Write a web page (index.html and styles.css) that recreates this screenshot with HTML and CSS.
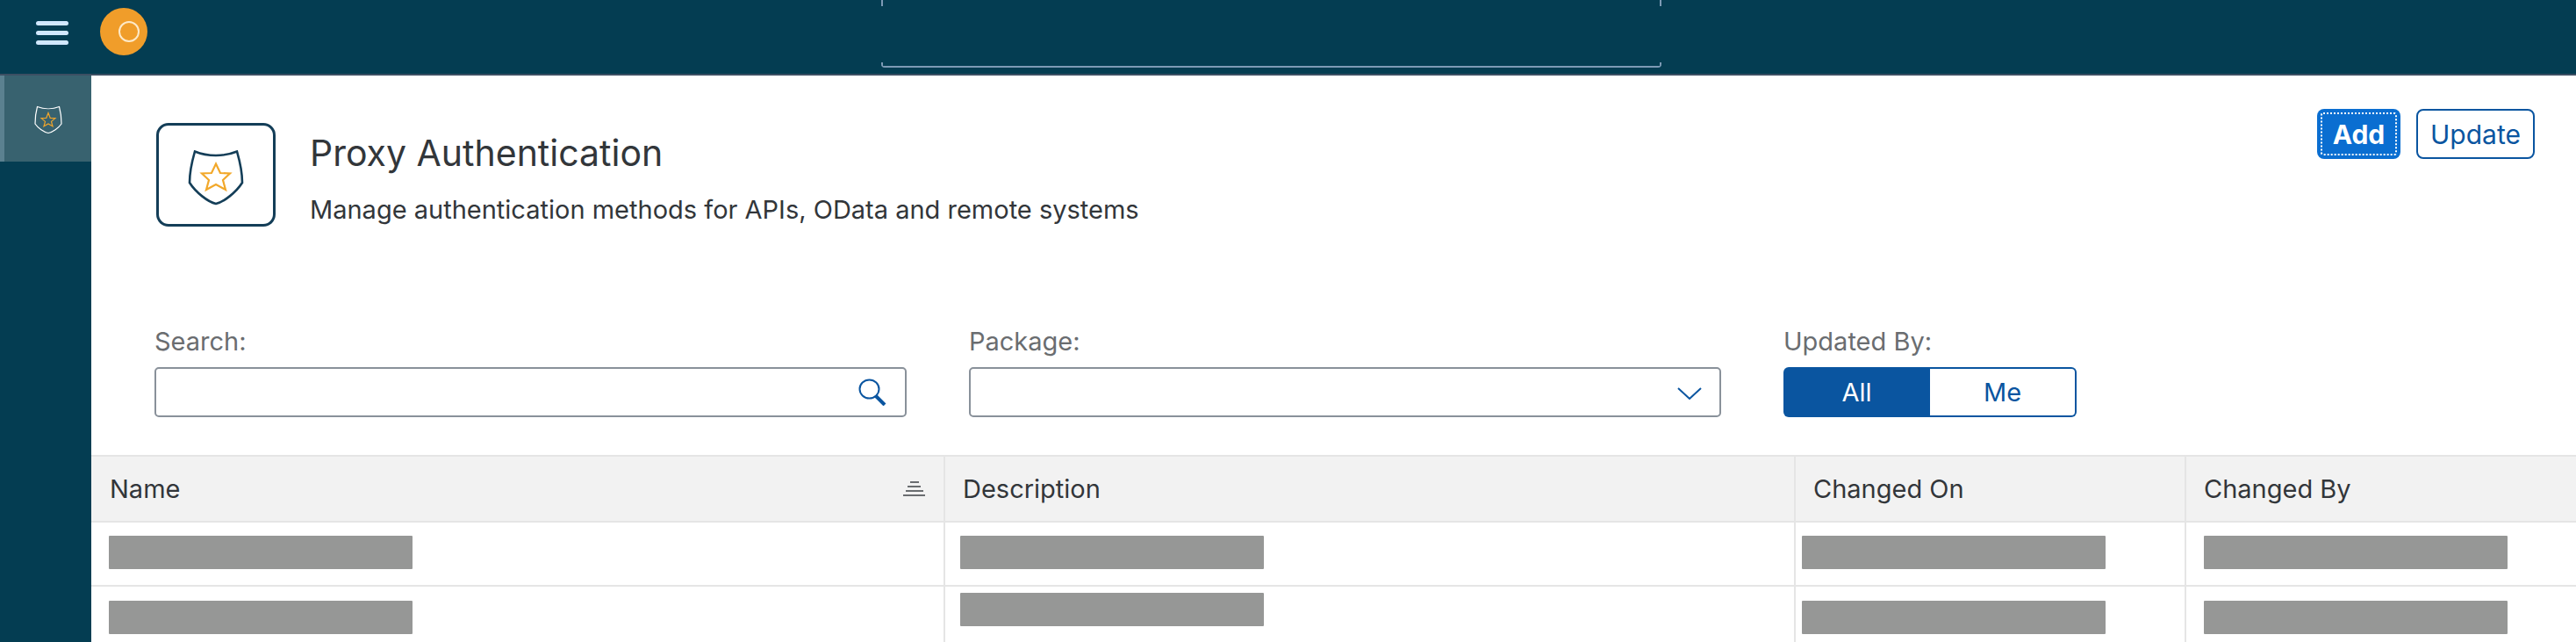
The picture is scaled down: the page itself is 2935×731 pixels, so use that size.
FILE: index.html
```html
<!DOCTYPE html>
<html lang="en">

<head>
    <meta charset="UTF-8">
    <meta name="viewport" content="width=device-width, initial-scale=1.0">
    <title>Proxy Authentication</title>
    <link rel="stylesheet" href="styles.css">
</head>

<body>
    <header class="top-bar">
        <div class="menu-icon"><span></span><span></span><span></span></div>
        <div class="logo"><span class="logo-ring"></span></div>
        <div class="search-slot"></div>
    </header>

    <div class="page">
        <nav class="side-nav">
            <div class="side-item active">
                <svg class="side-icon" viewBox="0 0 32 33" width="32" height="33">
                    <path d="M3.5 1.5 C 11 4.5, 21 4.5, 28.5 1.5 C 30 7, 31 13, 31 21 C 27.5 26, 21 30.5, 16 31.5 C 11 30.5, 4.5 26, 1 21 C 1 13, 2 7, 3.5 1.5 Z" fill="none" stroke="#fff" stroke-width="1.2" />
                    <path d="M16 8.5 L18.2 14.3 L24 14.6 L19.5 18.4 L21 23.8 L16 21 L11 23.8 L12.5 18.4 L8 14.6 L13.8 14.3 Z" fill="none" stroke="#f0a52b" stroke-width="1.2" />
                </svg>
            </div>
        </nav>

        <main class="content">
            <section class="title-row">
                <div class="title-icon">
                    <svg viewBox="0 0 64 63" width="64" height="63">
                        <path d="M8 1.5 C 23 7.5, 41 7.5, 56 1.5 C 59 12, 62 22, 62 37 C 55 48, 41 59, 32 61 C 23 59, 9 48, 2 37 C 2 22, 5 12, 8 1.5 Z" fill="none" stroke="#143e58" stroke-width="2.6" />
                        <path d="M32 15.5 L37 26 L48 26.5 L40 34 L43 45 L32 39 L21 45 L24 34 L16 26.5 L27 26 Z" fill="none" stroke="#f2a82a" stroke-width="2.2" />
                    </svg>
                </div>
                <div class="title-text">
                    <h1>Proxy Authentication</h1>
                    <p>Manage authentication methods for APIs, OData and remote systems</p>
                </div>
                <div class="actions">
                    <button class="btn-add">Add</button>
                    <button class="btn-update">Update</button>
                </div>
            </section>

            <section class="filters">
                <div class="filter filter-wide">
                    <label>Search:</label>
                    <div class="input-box">
                        <svg viewBox="0 0 33 31" width="33" height="31">
                            <ellipse cx="12.5" cy="12" rx="11" ry="10.5" fill="none" stroke="#0a55a0" stroke-width="2" />
                            <path d="M20 20 L30 30" stroke="#0a55a0" stroke-width="4" />
                        </svg>
                    </div>
                </div>
                <div class="filter filter-wide">
                    <label>Package:</label>
                    <div class="input-box">
                        <svg class="chevron" viewBox="0 0 28 14" width="28" height="14">
                            <path d="M1 1 L14 13 L27 1" fill="none" stroke="#0a55a0" stroke-width="2" />
                        </svg>
                    </div>
                </div>
                <div class="filter">
                    <label>Updated By:</label>
                    <div class="toggle">
                        <div class="toggle-on">All</div>
                        <div class="toggle-off">Me</div>
                    </div>
                </div>
            </section>

            <section class="table">
                <div class="cell head sorted">Name
                    <svg viewBox="0 0 25 17" width="25" height="17">
                        <path d="M8 1 H18 M5 6 H20 M3 11 H23 M0 16 H25" stroke="#6a6d70" stroke-width="2" />
                    </svg>
                </div>
                <div class="cell head">Description</div>
                <div class="cell head">Changed On</div>
                <div class="cell head">Changed By</div>

                <div class="cell row"><div class="hidden-bar bar-name"></div></div>
                <div class="cell row"><div class="hidden-bar bar-desc"></div></div>
                <div class="cell row"><div class="hidden-bar bar-date"></div></div>
                <div class="cell row"><div class="hidden-bar bar-user"></div></div>

                <div class="cell row"><div class="hidden-bar bar-name"></div></div>
                <div class="cell row top-tight"><div class="hidden-bar bar-desc"></div></div>
                <div class="cell row"><div class="hidden-bar bar-date"></div></div>
                <div class="cell row"><div class="hidden-bar bar-user"></div></div>
            </section>
        </main>
    </div>
</body>

</html>
```

FILE: styles.css
```css
html, body {
    margin: 0;
    height: 731px;
    overflow: hidden;
    background: #fff;
    font-family: Inter, "Liberation Sans", sans-serif;
}

/* top bar */
.top-bar {
    display: flex;
    height: 84px;
    background: #043d52;
    border-bottom: 2px solid #3c4f63;
}

.menu-icon {
    display: flex;
    flex-direction: column;
    gap: 6px;
    margin: 24px 0 0 41px;
    width: 37px;
}

.menu-icon span {
    height: 5px;
    border-radius: 3px;
    background: #d1e8ff;
}

.logo {
    display: flex;
    align-items: center;
    justify-content: center;
    width: 54px;
    height: 54px;
    margin: 9px 0 0 36px;
    padding-left: 12px;
    box-sizing: border-box;
    border-radius: 50%;
    background: #f09d2a;
}

.logo-ring {
    width: 24px;
    height: 24px;
    box-sizing: border-box;
    border: 2px solid #fde9c8;
    border-radius: 50%;
}

.search-slot {
    position: relative;
    width: 889px;
    height: 77px;
    margin-left: 836px;
    box-sizing: border-box;
    border-bottom: 2px solid #7d9ab5;
    border-radius: 0 0 4px 4px;
    background:
        linear-gradient(#7d9ab5, #7d9ab5) left bottom / 2px 4px no-repeat,
        linear-gradient(#7d9ab5, #7d9ab5) right bottom / 2px 4px no-repeat;
}

.search-slot::before,
.search-slot::after {
    content: "";
    position: absolute;
    top: 0;
    width: 2px;
    height: 7px;
    background: #7d9ab5;
}

.search-slot::before {
    left: 0;
}

.search-slot::after {
    right: 0;
}

/* page */
.page {
    display: flex;
    height: 645px;
}

.side-nav {
    width: 104px;
    flex-shrink: 0;
    background: #043d52;
}

.side-item {
    display: flex;
    align-items: center;
    justify-content: center;
    height: 98px;
    box-sizing: border-box;
}

.side-item.active {
    background: #38626f;
    border-left: 5px solid #5b8190;
}

.side-icon {
    margin-top: 2px;
}

.content {
    flex: 1;
    min-width: 0;
}

/* title */
.title-row {
    display: flex;
    height: 277px;
    padding: 54px 47px 0 74px;
    box-sizing: border-box;
}

.title-icon {
    display: flex;
    align-items: center;
    justify-content: center;
    width: 136px;
    height: 118px;
    padding-top: 6px;
    box-sizing: border-box;
    border: 3px solid #143e58;
    border-radius: 14px;
}

.title-text {
    flex: 1;
    margin-left: 39px;
}

h1 {
    margin: 10px 0 0;
    font-size: 41px;
    font-weight: 400;
    line-height: 48px;
    color: #32363a;
}

.title-text p {
    margin: 24px 0 0;
    font-size: 29px;
    line-height: 34px;
    color: #32363a;
}

.actions {
    display: flex;
    gap: 18px;
    margin-top: -16px;
}

.actions button {
    height: 57px;
    border-radius: 8px;
    font-family: inherit;
    font-size: 30px;
}

.btn-add {
    position: relative;
    width: 95px;
    border: 0;
    background: #0a6ed1;
    color: #fff;
    font-weight: 700;
}

.btn-add::after {
    content: "";
    position: absolute;
    inset: 4px;
    border: 2px dotted #fff;
    border-radius: 3px;
}

.btn-update {
    width: 135px;
    border: 2px solid #0a55a0;
    background: #fff;
    color: #0a55a0;
}

/* filters */
.filters {
    display: flex;
    gap: 71px;
    height: 155px;
    padding-left: 72px;
    box-sizing: border-box;
}

.filter label {
    display: block;
    height: 55px;
    padding-top: 9px;
    box-sizing: border-box;
    font-size: 29px;
    line-height: 34px;
    color: #6a6d70;
}

.filter-wide {
    width: 857px;
}

.input-box {
    display: flex;
    align-items: center;
    justify-content: flex-end;
    height: 57px;
    padding-right: 20px;
    box-sizing: border-box;
    border: 2px solid #89919a;
    border-radius: 5px;
}

.chevron {
    margin-top: 2px;
}

.toggle {
    display: flex;
    width: 334px;
    height: 57px;
    font-size: 29px;
}

.toggle div {
    display: flex;
    align-items: center;
    justify-content: center;
    box-sizing: border-box;
}

.toggle-on {
    width: 167px;
    border-radius: 6px 0 0 6px;
    background: #0a55a0;
    color: #fff;
}

.toggle-off {
    flex: 1;
    border: 2px solid #0a55a0;
    border-left: 0;
    border-radius: 0 6px 6px 0;
    color: #0a55a0;
}

/* table */
.table {
    display: grid;
    grid-template-columns: 973px 969px 445px 1fr;
    grid-template-rows: 75px 73px 1fr;
    height: 213px;
    border-top: 2px solid #e5e5e5;
    box-sizing: border-box;
    font-size: 29px;
    color: #32363a;
}

.cell {
    box-sizing: border-box;
    border-right: 2px solid #e5e5e5;
}

.cell:nth-child(4n) {
    border-right: 0;
}

.head {
    display: flex;
    align-items: center;
    justify-content: space-between;
    padding: 0 21px 0 20px;
    background: #f2f2f2;
    border-bottom: 2px solid #e5e5e5;
}

.sorted {
    padding-left: 21px;
}

.row {
    padding-top: 15px;
    border-bottom: 2px solid #e5e5e5;
}

.row:nth-last-child(-n+4) {
    border-bottom: 0;
    padding-top: 16px;
}

.top-tight.row {
    padding-top: 7px;
}

.hidden-bar {
    width: 346px;
    height: 38px;
    border-radius: 1px;
    background: #969796;
}

.bar-name {
    margin-left: 20px;
}

.bar-desc {
    margin-left: 17px;
}

.bar-date {
    margin-left: 7px;
}

.bar-user {
    margin-left: 20px;
}
```
